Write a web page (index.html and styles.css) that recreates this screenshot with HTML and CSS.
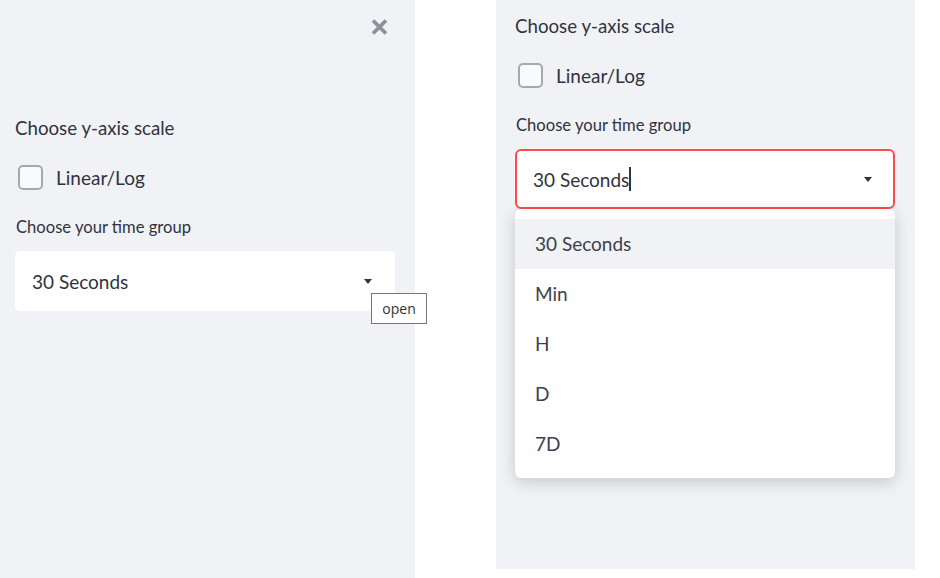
FILE: index.html
```html
<!DOCTYPE html>
<html lang="en">
<head>
<meta charset="utf-8">
<title>Sidebar select</title>
<link rel="stylesheet" href="styles.css">
</head>
<body>
<div class="page">
  <aside class="panel panel-left">
    <div class="close-row">
      <svg class="close-icon" viewBox="0 0 19 18" width="19" height="18" aria-hidden="true">
        <path d="M3 2.5 L16 15.5 M16 2.5 L3 15.5" stroke="#8f9199" stroke-width="3.8" fill="none"/>
      </svg>
    </div>
    <div class="widgets">
      <div class="label label-heading">Choose y-axis scale</div>
      <div class="checkbox-row">
        <span class="checkbox"></span>
        <span class="checkbox-label">Linear/Log</span>
      </div>
      <div class="label label-select">Choose your time group</div>
      <div class="select">
        <span class="select-value">30 Seconds</span>
        <span class="caret"></span>
      </div>
    </div>
    <div class="tooltip">open</div>
  </aside>

  <section class="panel panel-right">
    <div class="widgets">
      <div class="label label-heading">Choose y-axis scale</div>
      <div class="checkbox-row">
        <span class="checkbox"></span>
        <span class="checkbox-label">Linear/Log</span>
      </div>
      <div class="label label-select">Choose your time group</div>
      <div class="select-wrap">
        <div class="select select-focused">
          <span class="select-value">30 Seconds</span><span class="text-cursor"></span>
          <span class="caret"></span>
        </div>
        <ul class="menu">
          <li class="option option-active">30 Seconds</li>
          <li class="option">Min</li>
          <li class="option">H</li>
          <li class="option">D</li>
          <li class="option">7D</li>
        </ul>
      </div>
    </div>
  </section>
</div>
</body>
</html>
```

FILE: styles.css
```css
* { box-sizing: border-box; }

html, body {
  margin: 0;
  padding: 0;
  background: #ffffff;
}

body {
  font-family: "Lato", "Liberation Sans", sans-serif;
  color: #31333f;
}

.page {
  display: flex;
  align-items: flex-start;
  width: 940px;
  height: 578px;
}

.panel {
  background: #f0f2f6;
  position: relative;
}

.panel-left {
  width: 415px;
  height: 578px;
}

.panel-right {
  width: 419px;
  height: 569px;
  margin-left: 81px;
}

.close-row {
  display: flex;
  justify-content: flex-end;
  padding: 18px 26px 0 0;
  height: 36px;
}

.close-icon {
  display: block;
}

.widgets {
  display: flex;
  flex-direction: column;
  width: 380px;
}

.panel-left .widgets {
  margin: 78px 0 0 15px;
}

.panel-right .widgets {
  margin: 12px 0 0 19px;
}

.label {
  height: 28px;
  line-height: 28px;
  font-size: 16.6px;
  padding-left: 1px;
}

.label-heading {
  font-size: 18.7px;
  padding-left: 0;
}

.checkbox-row {
  display: flex;
  align-items: center;
  height: 28px;
  margin-top: 21px;
  padding-left: 3px;
}

.checkbox {
  width: 25px;
  height: 25px;
  border: 2px solid #a5a8b1;
  border-radius: 5px;
  background: #f9fafb;
}

.checkbox-label {
  margin-left: 13px;
  font-size: 19px;
}

.label-select {
  margin-top: 22px;
}

.select {
  position: relative;
  display: flex;
  align-items: center;
  height: 60px;
  margin-top: 10px;
  padding-left: 17px;
  background: #ffffff;
  border-radius: 5px;
  font-size: 19px;
}

.select-wrap {
  position: relative;
  margin-top: 10px;
}

.select-wrap .select {
  margin-top: 0;
}

.select-focused {
  border: 2px solid #ff4b4b;
  padding-left: 16px;
  border-radius: 6px;
}

.text-cursor {
  width: 2px;
  height: 24px;
  margin-left: 0;
  background: #31333f;
}

.caret {
  position: absolute;
  right: 23px;
  top: 50%;
  margin-top: -2px;
  width: 0;
  height: 0;
  border-left: 4.5px solid transparent;
  border-right: 4.5px solid transparent;
  border-top: 5px solid #31333f;
}

.select-focused .caret {
  right: 21px;
}

.menu {
  position: absolute;
  left: 0;
  right: 0;
  top: 60px;
  margin: 0;
  padding: 10px 0 9px;
  list-style: none;
  background: #ffffff;
  border-radius: 6px;
  box-shadow: 0 4px 16px rgba(0, 0, 0, 0.18);
  z-index: 2;
}

.option {
  height: 50px;
  line-height: 50px;
  padding-left: 20px;
  font-size: 19px;
  color: #3d3f4b;
}

.option-active {
  background: #f0f2f6;
}

.tooltip {
  position: absolute;
  left: 371px;
  top: 293px;
  width: 56px;
  height: 31px;
  display: flex;
  align-items: center;
  justify-content: center;
  background: #ffffff;
  border: 1px solid #767676;
  font-family: "Open Sans", "Liberation Sans", sans-serif;
  font-size: 14px;
  color: #333333;
  z-index: 3;
}
```
